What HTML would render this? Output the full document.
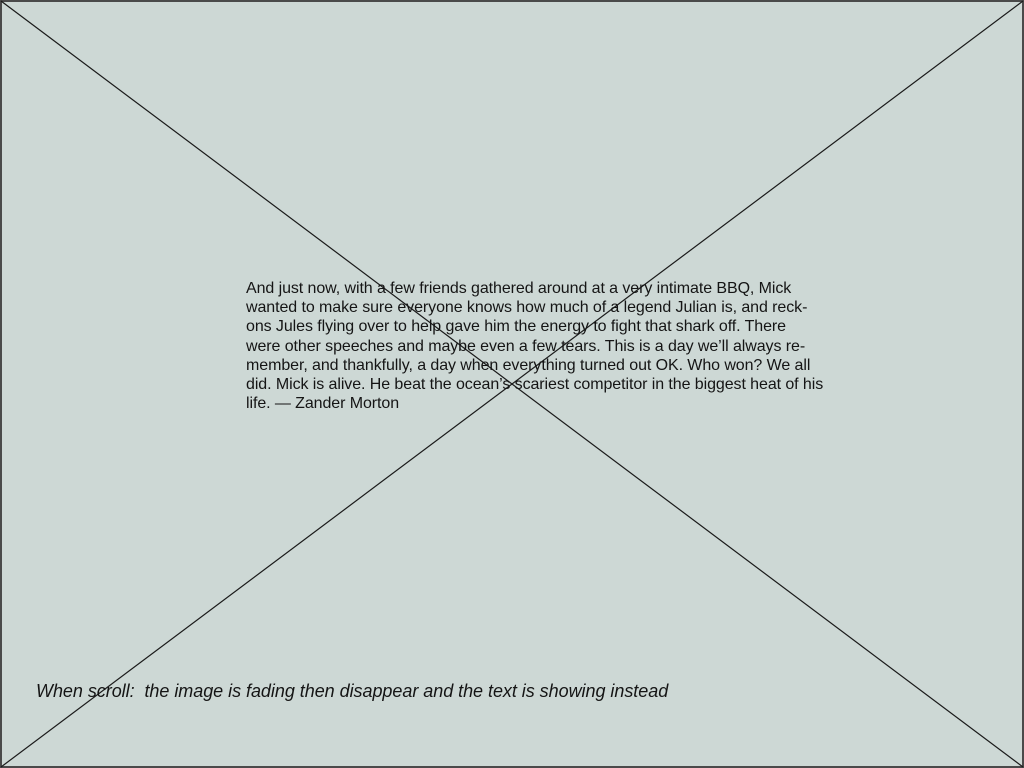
<!DOCTYPE html>
<html><head><meta charset="utf-8"><style>
html,body{margin:0;padding:0;width:1024px;height:768px;overflow:hidden;background:#cdd8d5;}
.frame{position:absolute;left:0;top:0;width:1020px;height:764px;border:2px solid #4a4a4a;background:#cdd8d5;}
svg{position:absolute;left:0;top:0;}
.t{position:absolute;left:246px;top:279px;font-family:"Liberation Sans",sans-serif;font-size:16px;line-height:19.2px;color:#151515;white-space:nowrap;letter-spacing:-0.08px;}
.n{position:absolute;left:36px;top:681px;font-family:"Liberation Sans",sans-serif;font-style:italic;font-size:18px;color:#151515;white-space:nowrap;letter-spacing:-0.04px;}
</style></head><body>
<div class="frame"></div>
<svg width="1024" height="768"><line x1="1" y1="1" x2="1023" y2="767" stroke="#1a1a1a" stroke-width="1.2"/><line x1="1023" y1="1" x2="1" y2="767" stroke="#1a1a1a" stroke-width="1.2"/></svg>
<div class="t">And just now, with a few friends gathered around at a very intimate BBQ, Mick<br>wanted to make sure everyone knows how much of a legend Julian is, and reck-<br>ons Jules flying over to help gave him the energy to fight that shark off. There<br>were other speeches and maybe even a few tears. This is a day we’ll always re-<br>member, and thankfully, a day when everything turned out OK. Who won? We all<br>did. Mick is alive. He beat the ocean’s scariest competitor in the biggest heat of his<br>life. — Zander Morton</div>
<div class="n">When scroll:&nbsp; the image is fading then disappear and the text is showing instead</div>
</body></html>
